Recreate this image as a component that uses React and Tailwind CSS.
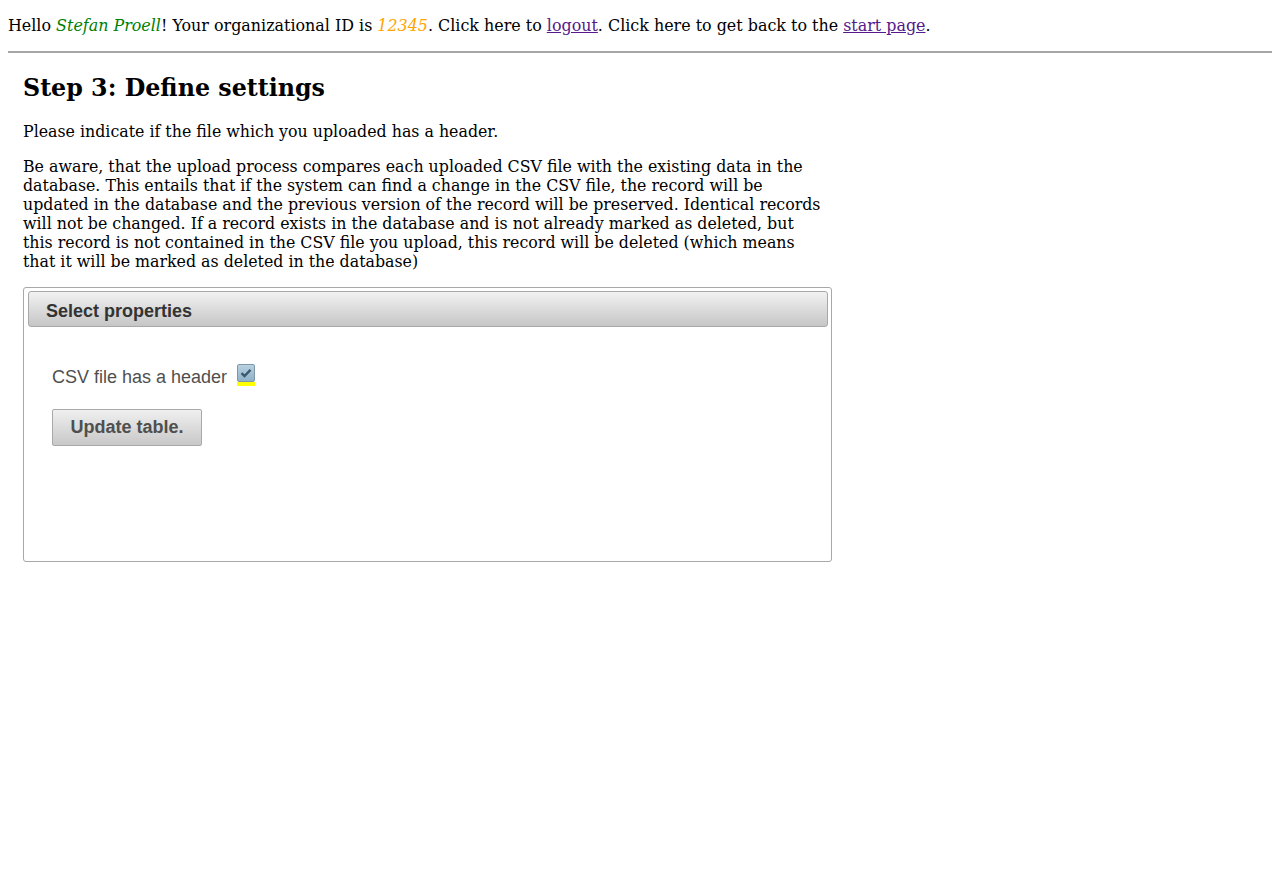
import React, { useState } from "react";

const serif = "font-['DejaVu_Serif',serif]";
const sans = "font-['Liberation_Sans',Arial,sans-serif]";

export default function App() {
  const [hasHeader, setHasHeader] = useState(true);

  return (
    <div className={`${serif} text-[15.82px] leading-[19px] text-black bg-white min-h-[874px] px-2`}>
      <p className="pt-4 text-[15.92px]">
        Hello <i className="text-[#008000]">Stefan Proell</i>! Your organizational ID is{" "}
        <i className="text-[#ffa500]">12345</i>. Click here to{" "}
        <a href="#" className="underline text-[#551a8b]">logout</a>. Click here to get back to the{" "}
        <a href="#" className="underline text-[#551a8b]">start page</a>.
      </p>

      <hr className="mt-4 border-0 border-t-2 border-[#a6a6a6]" />

      <div className="w-[809px] ml-[15px]">
        <h2 className="mt-[21px] text-[23.75px] leading-[28px] font-bold">Step 3: Define settings</h2>

        <p className="mt-5 w-[800px]">Please indicate if the file which you uploaded has a header.</p>

        <p className="mt-4 w-[800px]">
          Be aware, that the upload process compares each uploaded CSV file with the existing data in the
          database. This entails that if the system can find a change in the CSV file, the record will be
          updated in the database and the previous version of the record will be preserved. Identical records
          will not be changed. If a record exists in the database and is not already marked as deleted, but
          this record is not contained in the CSV file you upload, this record will be deleted (which means
          that it will be marked as deleted in the database)
        </p>

        {/* panel */}
        <div className={`${sans} mt-4 h-[275px] border border-[#a8a8a8] rounded-[3px] pt-[3px] pl-1 pr-[3px]`}>
          <div className="h-[36px] flex items-center pt-[4px] px-[17px] border border-[#a8a8a8] rounded-[3px] bg-gradient-to-b from-[#f2f2f2] to-[#c6c6c6] text-[#333] text-[18px] font-bold">
            Select properties
          </div>

          <div className="pl-[24px] pt-[38px]">
            <div className="flex items-start text-[18px] leading-[21px] text-[#4f4f4f]">
              <span className="pt-[2px]">CSV file has a header</span>
              <button
                type="button"
                onClick={() => setHasHeader(!hasHeader)}
                className="ml-[10px] mt-[-1px] relative w-[18px] h-[18px] border border-[#7f98a8] rounded-[2px] bg-gradient-to-b from-[#b9d1e1] to-[#8fb1c8] flex items-center justify-center"
              >
                {hasHeader && (
                  <svg width="12" height="10" viewBox="0 0 12 10">
                    <path d="M1.5 5.2 L4.5 8 L10.5 1.8" fill="none" stroke="#3c5a6e" strokeWidth="2.4" />
                  </svg>
                )}
                <span className="absolute left-[-1px] right-[-1px] bottom-[-5px] h-[4px] bg-[#ffff00]" />
              </button>
            </div>

            <button
              type="button"
              className="mt-[21px] w-[150px] h-[37px] border border-[#a8a8a8] rounded-[2px] bg-gradient-to-b from-[#f0f0f0] to-[#c8c8c8] text-[18px] font-bold text-[#4f4f4f]"
            >
              Update table.
            </button>
          </div>
        </div>
      </div>
    </div>
  );
}
